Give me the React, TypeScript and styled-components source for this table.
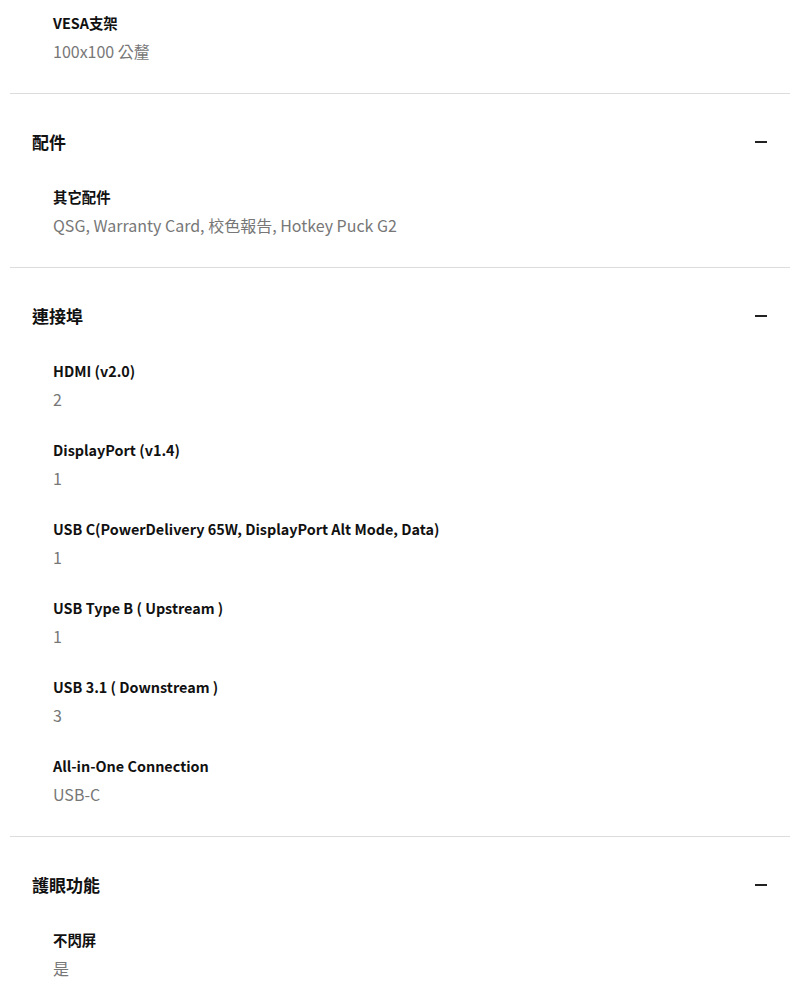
import React from "react";
import styled, { createGlobalStyle } from "styled-components";

const Global = createGlobalStyle`
  html, body { margin: 0; padding: 0; background: #fff; }
  body { font-family: "Noto Sans CJK TC", "Noto Sans", sans-serif; color: #111; }
`;

const Page = styled.div`
  width: 800px;
  padding: 0 10px;
  box-sizing: border-box;
`;

const Section = styled.section<{ $first?: boolean }>`
  border-top: ${(p) => (p.$first ? "none" : "1px solid #dcdcdc")};
  padding-top: ${(p) => (p.$first ? "9px" : "0")};
  padding-bottom: 28px;
`;

const Header = styled.div`
  display: flex;
  align-items: center;
  justify-content: space-between;
  padding: 31px 23px 0 22px;
  height: 34px;
`;

const Title = styled.h2`
  margin: 0;
  font-size: 17px;
  font-weight: 700;
  line-height: 34px;
  color: #111;
`;

const Minus = styled.span`
  display: block;
  width: 12px;
  height: 2px;
  background: #222;
`;

const Items = styled.div<{ $first?: boolean }>`
  display: flex;
  flex-direction: column;
  gap: 23px;
  padding: ${(p) => (p.$first ? "0" : "24px")} 0 0 43px;
`;

const Item = styled.div`
  display: flex;
  flex-direction: column;
`;

const Label = styled.div`
  font-size: 14.4px;
  font-weight: 700;
  line-height: 28px;
  color: #111;
`;

const Value = styled.div`
  font-size: 16px;
  font-weight: 400;
  line-height: 28px;
  color: #777;
`;

type Spec = { label: string; value: string };
type Group = { title?: string; items: Spec[] };

const groups: Group[] = [
  { items: [{ label: "VESA支架", value: "100x100 公釐" }] },
  {
    title: "配件",
    items: [
      {
        label: "其它配件",
        value: "QSG, Warranty Card, 校色報告, Hotkey Puck G2",
      },
    ],
  },
  {
    title: "連接埠",
    items: [
      { label: "HDMI (v2.0)", value: "2" },
      { label: "DisplayPort (v1.4)", value: "1" },
      {
        label: "USB C(PowerDelivery 65W, DisplayPort Alt Mode, Data)",
        value: "1",
      },
      { label: "USB Type B ( Upstream )", value: "1" },
      { label: "USB 3.1 ( Downstream )", value: "3" },
      { label: "All-in-One Connection", value: "USB-C" },
    ],
  },
  { title: "護眼功能", items: [{ label: "不閃屏", value: "是" }] },
];

export default function App() {
  return (
    <Page>
      <Global />
      {groups.map((g, i) => (
        <Section key={i} $first={!g.title}>
          {g.title && (
            <Header>
              <Title>{g.title}</Title>
              <Minus />
            </Header>
          )}
          <Items $first={!g.title}>
            {g.items.map((it) => (
              <Item key={it.label}>
                <Label>{it.label}</Label>
                <Value>{it.value}</Value>
              </Item>
            ))}
          </Items>
        </Section>
      ))}
    </Page>
  );
}
